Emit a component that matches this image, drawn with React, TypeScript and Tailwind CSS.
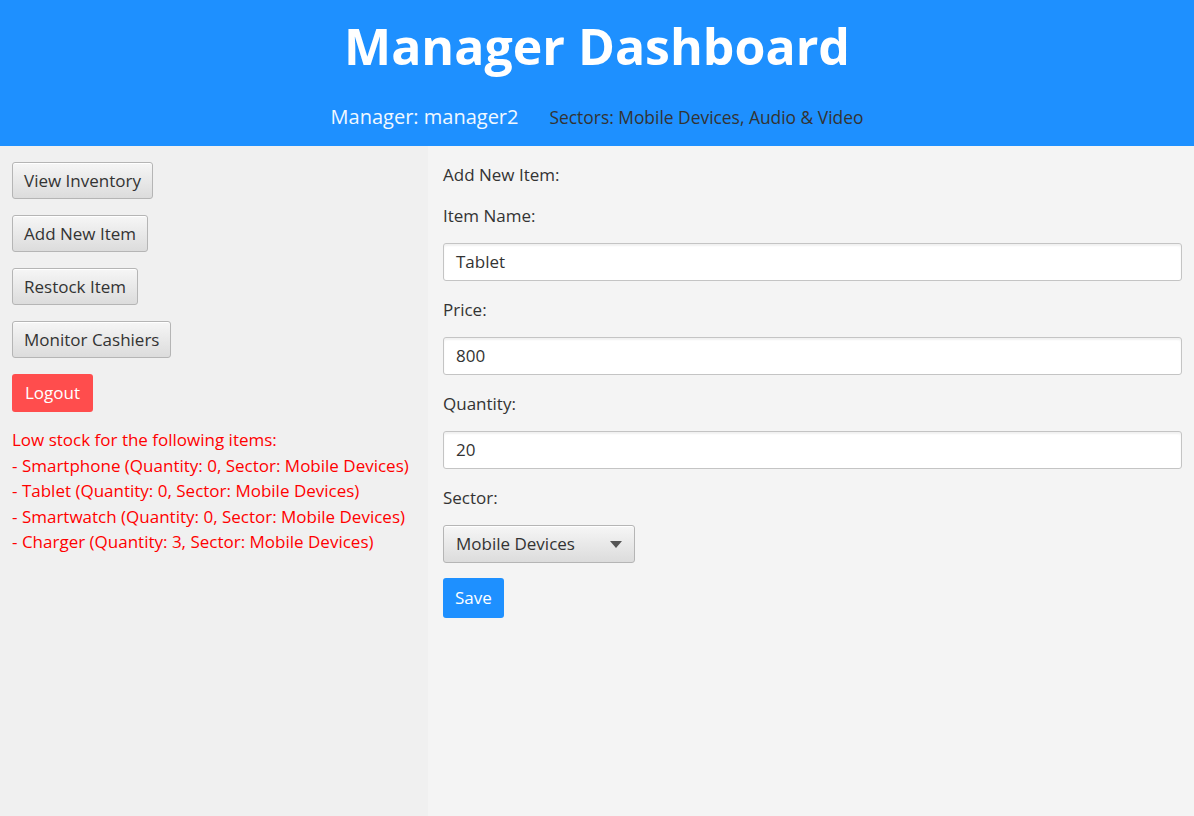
import type { ReactNode } from "react";

const font = { fontFamily: '"Open Sans", "Noto Sans", sans-serif' };

function FxButton({ children }: { children: ReactNode }) {
  return (
    <button
      type="button"
      className="h-[37px] rounded-[3px] border border-[#b5b5b5] bg-gradient-to-b from-[#f6f6f6] to-[#dcdcdc] px-[11px] text-[17px] text-[#333] shadow-[inset_0_1px_0_#ffffff]"
    >
      {children}
    </button>
  );
}

function FxInput({ value }: { value: string }) {
  return (
    <div className="flex h-[38px] items-center rounded-[3px] border border-[#c4c4c4] bg-white px-[12px] text-[17px] text-[#333] shadow-[inset_0_2px_2px_rgba(0,0,0,0.06)]">
      {value}
    </div>
  );
}

function Label({ children, className = "" }: { children: ReactNode; className?: string }) {
  return <div className={`flex h-[26px] items-center text-[17px] text-[#333] ${className}`}>{children}</div>;
}

const lowStock = [
  "- Smartphone (Quantity: 0, Sector: Mobile Devices)",
  "- Tablet (Quantity: 0, Sector: Mobile Devices)",
  "- Smartwatch (Quantity: 0, Sector: Mobile Devices)",
  "- Charger (Quantity: 3, Sector: Mobile Devices)",
];

export default function App() {
  return (
    <div className="flex h-[816px] w-[1194px] flex-col overflow-hidden" style={font}>
      <header className="flex h-[146px] flex-col items-center bg-[#1e90ff]">
        <h1 className="mt-[14px] text-[50px] font-bold leading-[64px] text-white">Manager Dashboard</h1>
        <div className="mt-[24px] flex items-center gap-[31px]">
          <span className="text-[20px] text-[#f0f8ff]">Manager: manager2</span>
          <span className="text-[17.4px] text-[#333]">Sectors: Mobile Devices, Audio &amp; Video</span>
        </div>
      </header>

      <div className="flex flex-1">
        <aside className="flex w-[428px] flex-col items-start bg-[#f0f0f0] px-[12px] pt-[16px]">
          <div className="flex flex-col items-start gap-[16px]">
            <FxButton>View Inventory</FxButton>
            <FxButton>Add New Item</FxButton>
            <FxButton>Restock Item</FxButton>
            <FxButton>Monitor Cashiers</FxButton>
            <button
              type="button"
              className="h-[38px] rounded-[3px] bg-[#ff4d4d] px-[13px] text-[17px] text-white"
            >
              Logout
            </button>
          </div>
          <div className="mt-[15px] text-[17px] leading-[25.5px] text-[#ff0000]">
            <div>Low stock for the following items:</div>
            {lowStock.map((line) => (
              <div key={line}>{line}</div>
            ))}
          </div>
        </aside>

        <main className="flex flex-1 flex-col bg-[#f4f4f4] pl-[15px] pr-[12px] pt-[16px]">
          <Label>Add New Item:</Label>
          <Label className="mt-[15px]">Item Name:</Label>
          <div className="mt-[14px]">
            <FxInput value="Tablet" />
          </div>
          <Label className="mt-[16px]">Price:</Label>
          <div className="mt-[14px]">
            <FxInput value="800" />
          </div>
          <Label className="mt-[16px]">Quantity:</Label>
          <div className="mt-[14px]">
            <FxInput value="20" />
          </div>
          <Label className="mt-[16px]">Sector:</Label>
          <div className="mt-[14px]">
            <button
              type="button"
              className="flex h-[38px] w-[192px] items-center justify-between rounded-[3px] border border-[#b5b5b5] bg-gradient-to-b from-[#f6f6f6] to-[#dcdcdc] pl-[12px] pr-[12px] text-[17px] text-[#333] shadow-[inset_0_1px_0_#ffffff]"
            >
              <span>Mobile Devices</span>
              <svg width="12" height="7" viewBox="0 0 12 7">
                <path d="M0 0 L12 0 L6 7 Z" fill="#555" />
              </svg>
            </button>
          </div>
          <div className="mt-[15px]">
            <button type="button" className="h-[40px] rounded-[3px] bg-[#1e90ff] px-[12px] text-[17px] text-white">
              Save
            </button>
          </div>
        </main>
      </div>
    </div>
  );
}
